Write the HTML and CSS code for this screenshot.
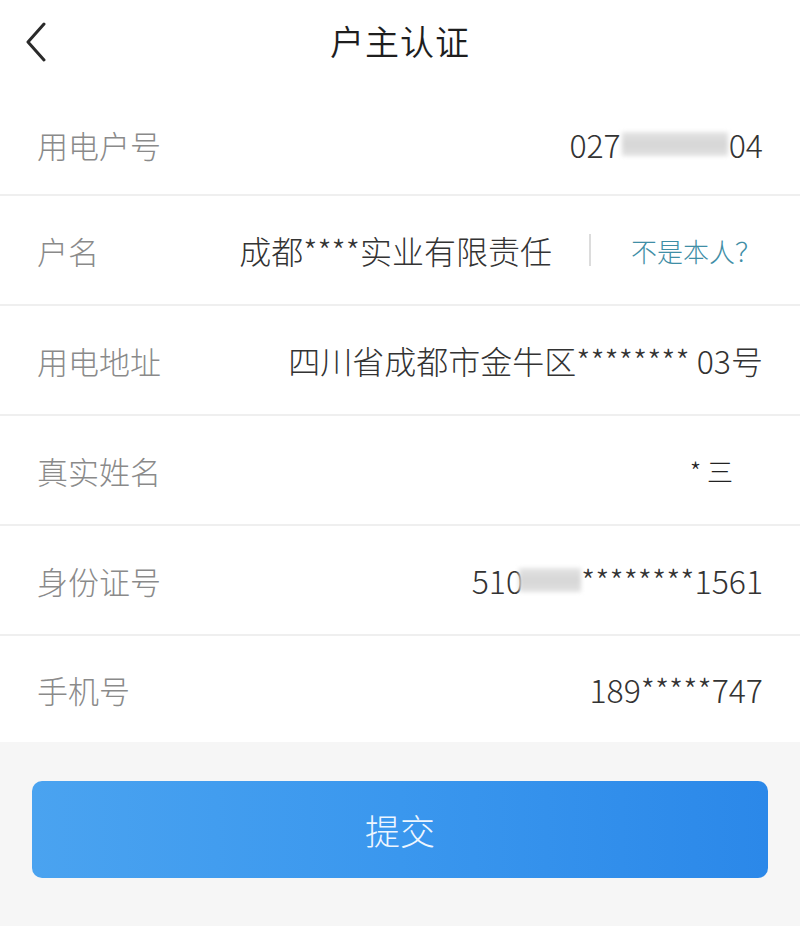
FILE: index.html
```html
<!DOCTYPE html>
<html lang="zh-CN">
<head>
<meta charset="utf-8">
<title>户主认证</title>
<link rel="stylesheet" href="styles.css">
</head>
<body>
<div class="page">
  <header class="header">
    <span class="back">
      <svg width="22" height="40" viewBox="0 0 22 40"><path d="M19 2 L3 20 L19 38" fill="none" stroke="#2a2a2a" stroke-width="3" stroke-linecap="round" stroke-linejoin="round"/></svg>
    </span>
    <h1 class="title">户主认证</h1>
  </header>
  <section class="list">
    <div class="row row-first">
      <span class="label">用电户号</span>
      <span class="value">027<span class="blur blur-a"></span>04</span>
    </div>
    <div class="row">
      <span class="label">户名</span>
      <span class="value value-name">成都****实业有限责任</span>
      <span class="divider"></span>
      <span class="link">不是本人？</span>
    </div>
    <div class="row">
      <span class="label">用电地址</span>
      <span class="value">四川省成都市金牛区******** 03号</span>
    </div>
    <div class="row">
      <span class="label">真实姓名</span>
      <span class="value value-short">* 三</span>
    </div>
    <div class="row">
      <span class="label">身份证号</span>
      <span class="value">510<span class="blur blur-b"></span>********1561</span>
    </div>
    <div class="row row-last">
      <span class="label">手机号</span>
      <span class="value">189*****747</span>
    </div>
  </section>
  <div class="footer">
    <button class="submit">提交</button>
  </div>
</div>
</body>
</html>
```

FILE: styles.css
```css
* { box-sizing: border-box; }
html, body {
  margin: 0;
  padding: 0;
  background: #f6f6f6;
}
body {
  font-family: "Noto Sans CJK SC", "Noto Sans", sans-serif;
  font-weight: 300;
}
.page {
  width: 800px;
  min-height: 926px;
  display: flex;
  flex-direction: column;
  background: #f6f6f6;
}
.header {
  height: 88px;
  background: #fff;
  display: flex;
  align-items: center;
  justify-content: center;
  position: relative;
}
.back {
  position: absolute;
  left: 25px;
  top: 22px;
  width: 22px;
  height: 40px;
  display: block;
}
.back svg { display: block; }
.title {
  margin: 0;
  font-size: 34px;
  font-weight: 350;
  color: #1e1e1e;
  letter-spacing: 1px;
  margin-top: -8px;
}
.list {
  background: #fff;
  display: flex;
  flex-direction: column;
}
.row {
  height: 110px;
  display: flex;
  align-items: center;
  padding: 0 37px;
  border-bottom: 2px solid #efefef;
}
.row-first {
  height: 108px;
  padding-top: 6px;
}
.row-last {
  height: 106px;
  border-bottom: none;
}
.label {
  font-size: 31px;
  color: #8a8a8a;
  flex: 0 0 auto;
}
.value {
  margin-left: auto;
  font-size: 32px;
  color: #333;
  display: flex;
  align-items: center;
  white-space: nowrap;
}
.value-short {
  font-size: 26px;
  margin-right: 30px;
  color: #222;
}
.divider {
  width: 2px;
  height: 32px;
  background: #dcdcdc;
  margin: 0 40px 0 37px;
}
.link {
  font-size: 26px;
  color: #3f8ea6;
  margin-right: 2px;
}
.blur {
  display: inline-block;
  height: 24px;
  background: linear-gradient(180deg, #e4e4e4 0%, #d6d6d6 50%, #e2e2e2 100%);
  filter: blur(2px);
}
.blur-a { width: 106px; margin: 0 1px; }
.blur-b { width: 62px; margin-left: -4px; }
.footer {
  padding: 39px 32px 0;
}
.submit {
  width: 100%;
  height: 97px;
  border: none;
  border-radius: 10px;
  background: linear-gradient(90deg, #4aa3f0 0%, #3a97ee 50%, #2b88e9 100%);
  color: #eef6ff;
  font-family: "Noto Sans CJK SC", sans-serif;
  font-weight: 300;
  font-size: 35px;
  display: flex;
  align-items: center;
  justify-content: center;
}
```
